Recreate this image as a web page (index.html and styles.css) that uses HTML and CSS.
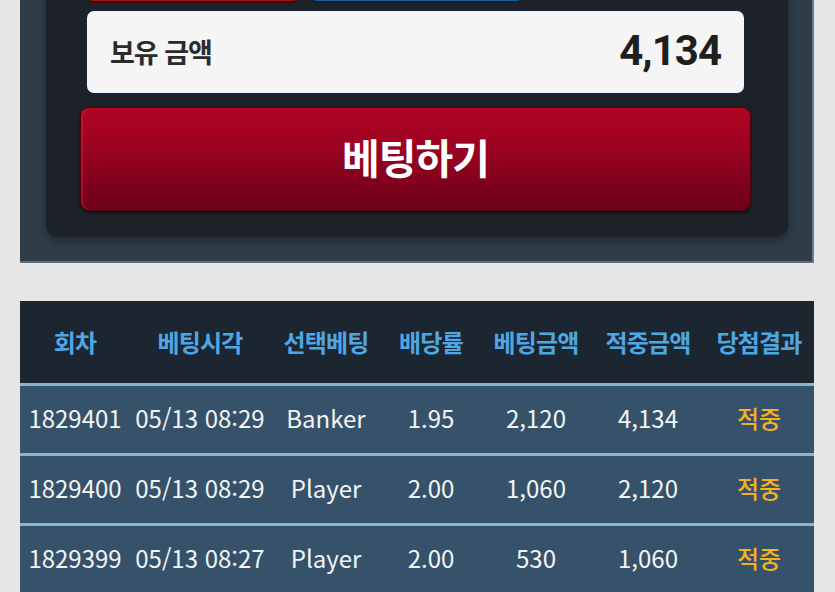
FILE: index.html
```html
<!DOCTYPE html>
<html lang="ko">
<head>
<meta charset="utf-8">
<title>베팅</title>
<link rel="stylesheet" href="styles.css">
</head>
<body>
<section class="panel">
  <div class="inner">
    <div class="choices">
      <div class="choice choice-red"></div>
      <div class="choice choice-blue"></div>
    </div>
    <div class="balance">
      <span class="balance-label">보유 금액</span>
      <span class="balance-value">4,134</span>
    </div>
    <button class="bet-btn">베팅하기</button>
  </div>
</section>

<div class="history">
  <div class="row head">
    <div>회차</div><div>베팅시각</div><div>선택베팅</div><div>배당률</div><div>베팅금액</div><div>적중금액</div><div>당첨결과</div>
  </div>
  <div class="row">
    <div>1829401</div><div>05/13 08:29</div><div>Banker</div><div>1.95</div><div>2,120</div><div>4,134</div><div class="win">적중</div>
  </div>
  <div class="row">
    <div>1829400</div><div>05/13 08:29</div><div>Player</div><div>2.00</div><div>1,060</div><div>2,120</div><div class="win">적중</div>
  </div>
  <div class="row">
    <div>1829399</div><div>05/13 08:27</div><div>Player</div><div>2.00</div><div>530</div><div>1,060</div><div class="win">적중</div>
  </div>
</div>
</body>
</html>
```
FILE: styles.css
```css
* { box-sizing: border-box; }
html, body { margin: 0; padding: 0; }
body {
  background: #e6e6e6;
  font-family: "Noto Sans CJK KR", "Noto Sans", sans-serif;
  overflow: hidden;
  height: 592px;
}
.panel {
  width: 794px;
  margin: -60px 0 0 20px;
  background: #2f3d48;
  border-right: 2px solid #6c7c8a;
  border-bottom: 2px solid #5e6e7c;
  padding: 0 0 24px 0;
}
.inner {
  margin: 0 24px 0 26px;
  background: #1c2227;
  border-radius: 0 0 12px 12px;
  box-shadow: 0 4px 8px rgba(0,0,0,0.35);
  padding: 10px 37px 26px 34px;
}
.choices {
  display: flex;
  gap: 12px;
  margin-left: 7px;
  height: 53px;
}
.choice {
  width: 212px;
  height: 53px;
  border-radius: 6px;
}
.choice-red {
  background: #a3101c;
  border: 2px solid #3a0a0c;
}
.choice-blue {
  background: #1e5f96;
  border: 2px solid #0f1e33;
}
.balance {
  margin: 6px 5px 0 5px;
  height: 86px;
  background: #f5f5f5;
  border: 2px solid #18233d;
  border-radius: 9px;
  display: flex;
  align-items: center;
  justify-content: space-between;
  padding: 0 23px 4px 23px;
}
.balance-label {
  font-size: 27px;
  font-weight: 700;
  color: #2b2b2b;
  letter-spacing: -1px;
  margin-top: 2px;
}
.balance-value {
  font-family: Roboto, "Liberation Sans", sans-serif;
  font-size: 42px;
  font-weight: 700;
  color: #1f1f1f;
  letter-spacing: -1px;
}
.bet-btn {
  display: block;
  width: 100%;
  height: 104px;
  margin-top: 12px;
  border: 1px solid #4e000e;
  border-radius: 9px;
  background: linear-gradient(to bottom, #b10421 0%, #960322 45%, #6c0017 100%);
  box-shadow: inset 2px 0 2px rgba(255,60,60,0.35), 0 2px 3px rgba(0,0,0,0.5);
  color: #ffffff;
  font-family: "Noto Sans CJK KR", sans-serif;
  font-size: 41px;
  font-weight: 700;
  letter-spacing: -1px;
  padding: 0 0 6px 0;
}
.history {
  width: 794px;
  margin: 38px 0 0 20px;
}
.row {
  display: grid;
  grid-template-columns: 110px 140px 112px 98px 112px 112px 110px;
  align-items: center;
  height: 70px;
  background: #36526a;
  border-top: 3px solid #86b6d4;
  color: #f2f4f6;
  font-size: 24px;
  text-align: center;
  padding-bottom: 4px;
}
.row > div { white-space: nowrap; }
.row.head {
  height: 82px;
  background: #1b2631;
  border-top: none;
  color: #4fa6e3;
  font-size: 24px;
  font-weight: 700;
  letter-spacing: -0.8px;
  padding-bottom: 2px;
}
.row .win { color: #f3b21f; font-size: 24px; font-weight: 500; }
```
